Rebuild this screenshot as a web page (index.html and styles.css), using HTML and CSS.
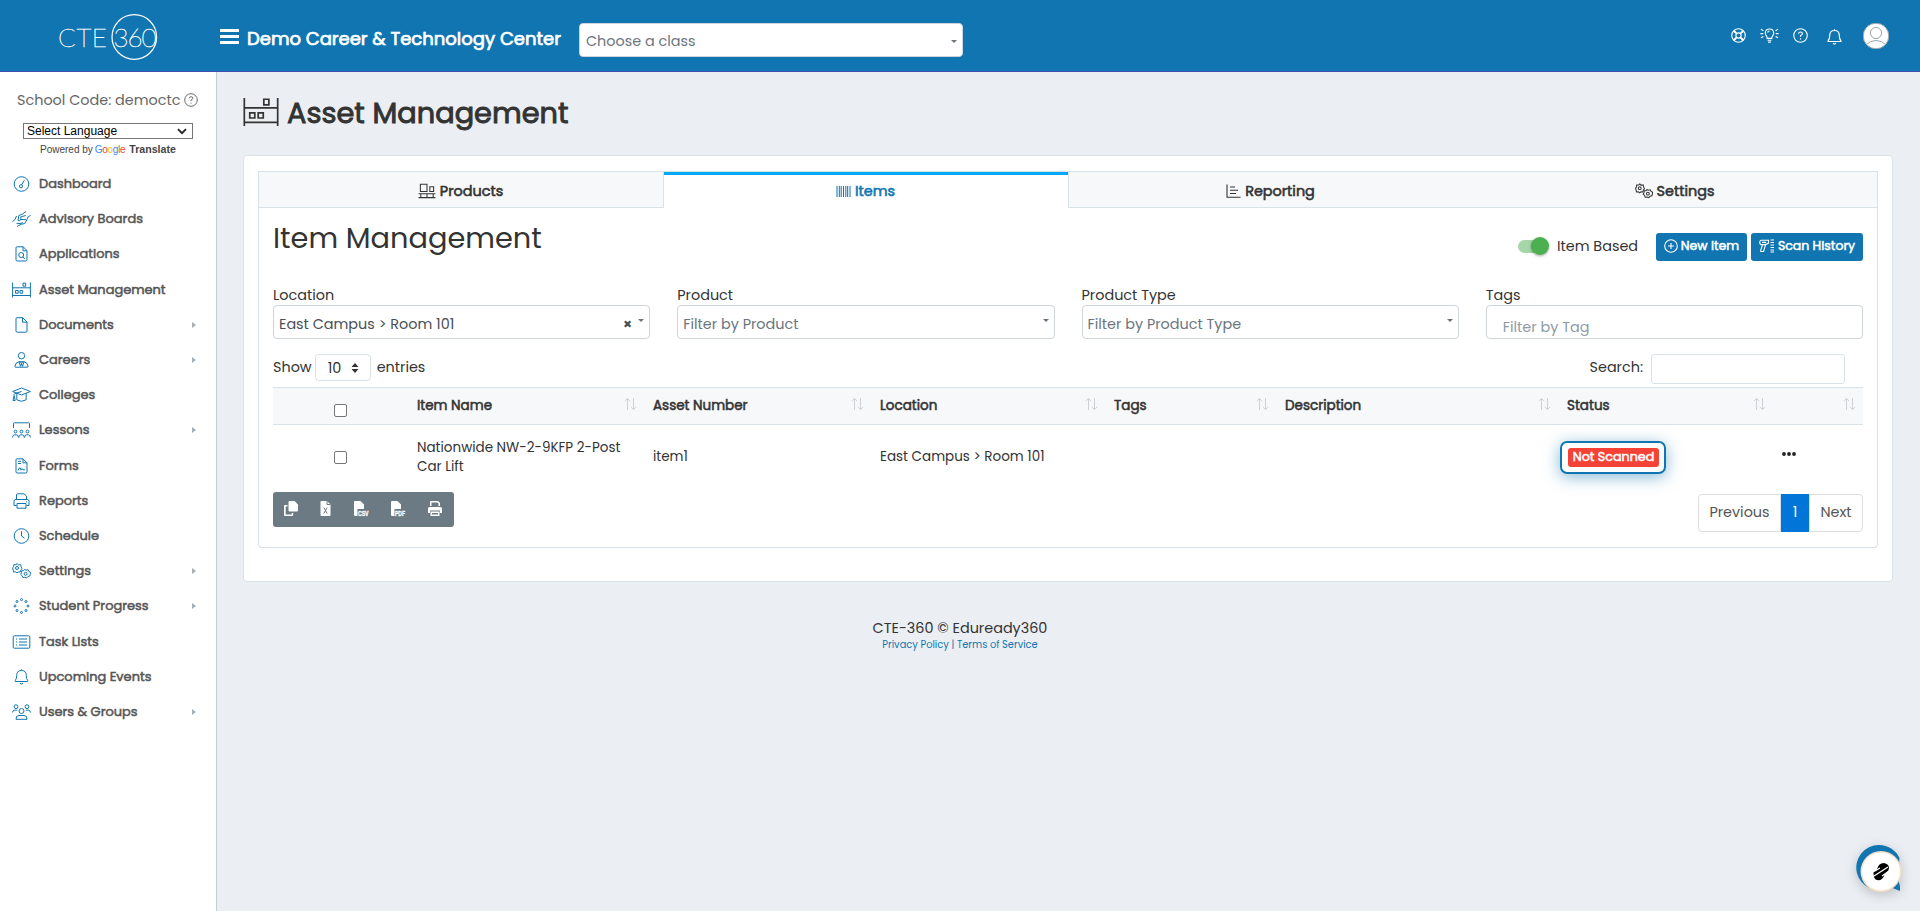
FILE: index.html
```html
<!DOCTYPE html>
<html lang="en">
<head>
<meta charset="utf-8">
<title>Asset Management</title>
<link rel="stylesheet" href="styles.css">
</head>
<body>
<svg class="sprite" aria-hidden="true">
  <symbol id="gauge" viewBox="0 0 19 16"><circle cx="9.5" cy="8" r="7.3"/><circle cx="9" cy="10.3" r="1.6"/><path d="M9.7 8.8 12.4 4.2"/></symbol>
  <symbol id="hands" viewBox="0 0 19 16"><path d="M.4 10.8 3 8.500 4.500 5M5 15.500l4-2.200 3.800-.8 2.500-4.700M18.600 4.300 15.800 6.200 15.300 8M14 .6 10.500 3 6.800 4.500 6 9.500q2 1.200 2.800-1.500V5.800l5-1.300M9 8.500l5 .2M4.500 12.300l3.500.3 3-1"/></symbol>
  <symbol id="filesearch" viewBox="0 0 19 16"><path d="M4 1.7Q4 .8 5 .8h6.2l3.8 3.8v9.2q0 1.2-1.2 1.2H5.2Q4 15 4 13.8zM11 .8v4h4"/><circle cx="9.2" cy="9" r="2.5"/><path d="m11 11 1.8 2"/></symbol>
  <symbol id="shelf" viewBox="0 0 19 16"><path d="M.6 .5v15M18.400 .5v15M.6 5.800h17.800M.6 13.500h17.800M11 1.200h2.700v3h-2.700zM3.500 8.500h2.700v2.700H3.500zM8 8.500h2.700v2.700H8z"/></symbol>
  <symbol id="file" viewBox="0 0 19 16"><path d="M4 1.700Q4 .7 5 .7h5.700l4.300 4.300v9q0 1.200-1.200 1.200H5.200Q4 15.200 4 14zM10.500.7v4.500H15"/></symbol>
  <symbol id="person" viewBox="0 0 19 16"><circle cx="9.500" cy="3.700" r="3.200"/><path d="M3.500 15.200q-.8 0-.5-1.200.8-4 4-4.300h5q3.200.3 4 4.300.3 1.200-.5 1.200zM7 9.800l1.500 4.500 1-2.500 1 2.500L12 9.800M8.500 10l1 1.800 1-1.800"/></symbol>
  <symbol id="cap" viewBox="0 0 19 16"><path d="M.6 4.500 9.500 1l8.900 3.500L9.500 8zM4.800 6.300v6.500q4.700 3 9.400 0V6.300M9.500 4.500 2.800 6.500Q2 7 2 9l-1 4.500h2.200L2.300 9"/></symbol>
  <symbol id="class" viewBox="0 0 19 16"><path d="M1.500 6V1.700Q1.500.8 2.500.8h14q1 0 1 .9V6"/><circle cx="3.500" cy="9.500" r="1.400"/><circle cx="9.500" cy="9.500" r="1.400"/><circle cx="15.500" cy="9.500" r="1.400"/><path d="M.6 15.500q0-2.700 2-2.700h1.800q2 0 2 2.700M6.800 15.500q0-2.700 2-2.700h1.400q2 0 2 2.700M12.600 15.500q0-2.700 2-2.700h1.800q2 0 2 2.700"/></symbol>
  <symbol id="form" viewBox="0 0 19 16"><path d="M4 1.700Q4 .8 5 .8h6l4 4v9q0 1.200-1.200 1.200H5.200Q4 15 4 13.800zM11 .8v4h4M6 3.300h3M6 5.500h3M6 12.500q1.500-4 2.500-2.500t0 2q2-2 2.500-.2h2"/></symbol>
  <symbol id="printer" viewBox="0 0 19 16"><path d="M4.500 6.500V1.800q0-1 1-1H12l2.500 2.300v3.400M4.500 12.500H2V8.300q0-1.800 1.800-1.800h11.400q1.800 0 1.800 1.800v4.200h-2.500M5 10.500h9v4.700H5z"/><path d="M14 8.800h1"/></symbol>
  <symbol id="clock" viewBox="0 0 19 16"><circle cx="9.500" cy="8" r="7.300"/><path d="M9.500 3.200V8l3 2.200"/></symbol>
  <symbol id="gears" viewBox="0 0 19 16"><circle cx="5" cy="5" r="1.500"/><path d="m5 .6 1.400 1.200 2.300-.2.400 2.100L10 5.600 8.700 7.300l-.5 1.800-2-.2L5 10l-1.400-1.100-2 .1-.4-1.900L.6 5l1-1.500.2-1.900 2 .1z"/><circle cx="13.600" cy="10.800" r="1.500"/><path d="m12.500 6.500 1.600.7 2-.5.8 1.800 1.700.8-.3 2.200-.5 1.500-1.900.5-1.300 1.600-1.800-.8-2 .2-.7-1.800-1.400-1.300.8-1.700.2-1.900 1.900-.1z"/></symbol>
  <symbol id="dots" viewBox="0 0 19 16"><circle cx="9.500" cy="1.600" r="1"/><circle cx="5" cy="3.500" r="1"/><circle cx="14" cy="3.500" r="1"/><circle cx="3" cy="8" r="1"/><circle cx="16" cy="8" r="1"/><circle cx="5" cy="12.500" r="1"/><circle cx="14" cy="12.500" r="1"/><circle cx="9.500" cy="14.400" r="1"/></symbol>
  <symbol id="list" viewBox="0 0 19 16"><rect x="1.200" y="1.800" width="16.600" height="12.400" rx="1.200"/><path d="M4 5h1.200M4 8h1.200M4 11h1.200M7 5h8M7 8h8M7 11h8"/></symbol>
  <symbol id="bell" viewBox="0 0 19 16"><path d="M9.500.3v1.200M3.300 12.500q-.6 0 0-1 1.400-1.700 1.400-5 0-5 4.800-5t4.800 5q0 3.300 1.400 5 .6 1 0 1zM8 14.200q1.500 1.800 3 0"/></symbol>
  <symbol id="users" viewBox="0 0 19 16"><circle cx="4" cy="2.700" r="1.900"/><circle cx="15" cy="2.700" r="1.900"/><circle cx="9.500" cy="7" r="2.500"/><path d="M.6 8.500q0-2.300 2-2.300h2.600M18.400 8.500q0-2.300-2-2.300h-2.600M4 15.300q-.3-3.800 3-3.800h5q3.300 0 3 3.800z"/></symbol>
  <symbol id="boxes" viewBox="0 0 19 16"><path d="M2.500.8h7v7.700h-7zM12.500 3.500h4v5h-4zM.6 10.800h17.800M.6 15h17.800M3 10.800V15M9.500 10.800V15M16 10.800V15"/></symbol>
  <symbol id="barcode" viewBox="0 0 16 14"><path d="M1 1v12M3.500 1v12M5.500 1v12M8 1v12M10.500 1v12M12.500 1v12M15 1v12"/></symbol>
  <symbol id="chart" viewBox="0 0 15 14"><path d="M1 .5v12.700h13.500M4 3h5M4 6.200h8M4 9.500h6"/></symbol>
  <symbol id="scan" viewBox="0 0 16 14"><path d="M9.500 1.200H2L.8 2.400v2L2 5.600h4.500l3-1.500zM3 3.400h4M3.500 5.800 1.800 11v1.500h2.800L6.500 5.800M11.500 1H15M11.500 3.500H15M11.500 6H15M11.500 8.500H15M11.500 11H15M11.500 13H15"/></symbol>
  <symbol id="plus" viewBox="0 0 14 14"><circle cx="7" cy="7" r="6.300"/><path d="M7 4v6M4 7h6"/></symbol>
  <symbol id="help" viewBox="0 0 16 16"><circle cx="8" cy="8" r="7.200"/><path d="M5.900 6.200q.2-2 2.100-2t2.100 1.800Q10.100 7.200 8 8v1.300M8 11v1.200"/></symbol>
  <symbol id="ring" viewBox="0 0 16 16"><circle cx="8" cy="8" r="7.200"/><circle cx="8" cy="8" r="2.800"/><path d="m2.500 3.500 3.800 3M3.500 2.500l3 3.800M12.500 2.500l-3 3.800M13.500 3.500l-3.800 3M2.500 12.500l3.800-3M3.500 13.500l3-3.800M12.500 13.500l-3-3.800M13.500 12.500l-3.800-3"/></symbol>
  <symbol id="bulb" viewBox="0 0 20 16"><path d="M7.500 11q0-1.500-1-2.800-1-1.300-1-3.200Q6 1 10 1t4.500 4q0 1.900-1 3.200t-1 2.800zM8 13h4M8.500 15h3M8 5q.3-1.700 2-1.800M3.500 3 .8 1.200M3.300 6H.3M3.500 9 .8 10.500M16.500 3l2.700-1.800M16.700 6h3M16.500 9l2.700 1.500"/></symbol>
  <symbol id="sort" viewBox="0 0 13 12"><path d="M3.500 12V.8M.8 3 3.500.5 6.200 3M9.500 0v11.200M6.800 9l2.700 2.500L12.200 9"/></symbol>
</svg>

<header class="topbar">
  <div class="brand"><svg class="logo" viewBox="0 0 100 46"><text x="-1" y="32.500" class="logo-text" textLength="49">CTE</text><circle cx="75.300" cy="23" r="22.300"/><text x="54.500" y="32.500" class="logo-text" textLength="43">360</text></svg></div>
  <div class="burger"><i></i><i></i><i></i></div>
  <div class="school">Demo Career &amp; Technology Center</div>
  <div class="class-select"><span>Choose a class</span><b class="caret"></b></div>
  <nav class="tools">
    <svg class="ic tool"><use href="#ring"/></svg>
    <svg class="ic tool bulb"><use href="#bulb"/></svg>
    <svg class="ic tool"><use href="#help"/></svg>
    <svg class="ic tool bell"><use href="#bell"/></svg>
    <svg class="avatar" viewBox="0 0 26 26"><circle cx="13" cy="13" r="12.800" fill="#fff"/><circle cx="13" cy="10" r="5.600"/><path d="M3.500 21.500Q7 17.500 13 17.500t9.500 4"/></svg>
  </nav>
</header>

<div class="shell">
<aside class="sidebar">
  <div class="code"><span>School Code: democtc</span><svg class="ic"><use href="#help"/></svg></div>
  <div class="lang"><span>Select Language</span><svg viewBox="0 0 10 7"><path d="m1 1.200 4 4 4-4"/></svg></div>
  <div class="powered"><span class="by">Powered by</span><span class="google"><i class="b">G</i><i class="r">o</i><i class="y">o</i><i class="b">g</i><i class="g">l</i><i class="r">e</i></span><b>Translate</b></div>
  <ul class="menu">
    <li><svg class="ic"><use href="#gauge"/></svg><span>Dashboard</span></li>
    <li><svg class="ic"><use href="#hands"/></svg><span>Advisory Boards</span></li>
    <li><svg class="ic"><use href="#filesearch"/></svg><span>Applications</span></li>
    <li><svg class="ic"><use href="#shelf"/></svg><span>Asset Management</span></li>
    <li class="more"><svg class="ic"><use href="#file"/></svg><span>Documents</span></li>
    <li class="more"><svg class="ic"><use href="#person"/></svg><span>Careers</span></li>
    <li><svg class="ic"><use href="#cap"/></svg><span>Colleges</span></li>
    <li class="more"><svg class="ic"><use href="#class"/></svg><span>Lessons</span></li>
    <li><svg class="ic"><use href="#form"/></svg><span>Forms</span></li>
    <li><svg class="ic"><use href="#printer"/></svg><span>Reports</span></li>
    <li><svg class="ic"><use href="#clock"/></svg><span>Schedule</span></li>
    <li class="more"><svg class="ic"><use href="#gears"/></svg><span>Settings</span></li>
    <li class="more"><svg class="ic"><use href="#dots"/></svg><span>Student Progress</span></li>
    <li><svg class="ic"><use href="#list"/></svg><span>Task Lists</span></li>
    <li><svg class="ic"><use href="#bell"/></svg><span>Upcoming Events</span></li>
    <li class="more"><svg class="ic"><use href="#users"/></svg><span>Users &amp; Groups</span></li>
  </ul>
</aside>

<main class="main">
  <h1 class="page-title"><svg class="ic"><use href="#shelf"/></svg><span>Asset Management</span></h1>
  <section class="card">
    <div class="tabs">
      <div class="tab"><svg class="ic w19"><use href="#boxes"/></svg><span>Products</span></div>
      <div class="tab active"><svg class="ic w16"><use href="#barcode"/></svg><span>Items</span></div>
      <div class="tab"><svg class="ic w15"><use href="#chart"/></svg><span>Reporting</span></div>
      <div class="tab"><svg class="ic w19"><use href="#gears"/></svg><span>Settings</span></div>
    </div>
    <div class="panel">
      <div class="head">
        <h2>Item Management</h2>
        <div class="actions">
          <div class="switch"><i></i></div><span class="switch-label">Item Based</span>
          <button class="btn new"><svg class="ic"><use href="#plus"/></svg><span>New Item</span></button>
          <button class="btn scan"><svg class="ic"><use href="#scan"/></svg><span>Scan History</span></button>
        </div>
      </div>
      <div class="filters">
        <div class="field"><label>Location</label><div class="box value"><span>East Campus &gt; Room 101</span><em>×</em><b class="caret"></b></div></div>
        <div class="field"><label>Product</label><div class="box"><span>Filter by Product</span><b class="caret"></b></div></div>
        <div class="field"><label>Product Type</label><div class="box"><span>Filter by Product Type</span><b class="caret"></b></div></div>
        <div class="field"><label>Tags</label><div class="box tagbox"><span>Filter by Tag</span></div></div>
      </div>
      <div class="controls">
        <span class="show">Show</span>
        <div class="count"><span>10</span><svg viewBox="0 0 8 10"><path d="M4 0 7.500 4H.5zM4 10 .5 6h7z"/></svg></div>
        <span>entries</span>
        <span class="search-label">Search:</span><div class="search"></div>
      </div>
      <table class="grid">
        <colgroup><col class="c1"><col class="c2"><col class="c3"><col class="c4"><col class="c5"><col class="c6"><col class="c7"><col class="c8"></colgroup>
        <thead><tr>
          <th class="chk"><i></i></th>
          <th><div>Item Name<svg class="ic"><use href="#sort"/></svg></div></th>
          <th><div>Asset Number<svg class="ic"><use href="#sort"/></svg></div></th>
          <th><div>Location<svg class="ic"><use href="#sort"/></svg></div></th>
          <th><div>Tags<svg class="ic"><use href="#sort"/></svg></div></th>
          <th><div>Description<svg class="ic"><use href="#sort"/></svg></div></th>
          <th><div>Status<svg class="ic"><use href="#sort"/></svg></div></th>
          <th class="last"><div><svg class="ic"><use href="#sort"/></svg></div></th>
        </tr></thead>
        <tbody><tr>
          <td class="chk"><i></i></td>
          <td>Nationwide NW-2-9KFP 2-Post<br>Car Lift</td>
          <td>item1</td>
          <td>East Campus &gt; Room 101</td>
          <td></td><td></td>
          <td class="status"><div class="ring"><span>Not Scanned</span></div></td>
          <td class="dots"><svg viewBox="0 0 14 4"><circle cx="2" cy="2" r="1.900"/><circle cx="7" cy="2" r="1.900"/><circle cx="12" cy="2" r="1.900"/></svg></td>
        </tr></tbody>
      </table>
      <div class="foot">
        <div class="exports">
          <svg viewBox="0 0 14 15"><path d="M5.500 0h5L14 3.500V9.500q0 1-1 1H5.500q-1 0-1-1V1q0-1 1-1zM1 4h2.500v1.500H1.700v8h6V12h1.500v2q0 1-1 1H1q-1 0-1-1V5q0-1 1-1z"/></svg>
          <svg viewBox="0 0 14 15"><path d="M2.500 0h5.500L11.500 3.500V14q0 1-1 1h-8q-1 0-1-1V1q0-1 1-1z"/><path class="cut" d="m4.800 6.500 3.400 6M8.200 6.500l-3.400 6M8 0v3.500h3.500"/></svg>
          <svg viewBox="0 0 14 15"><path d="M1 0h5.500L10 3.500V8H3.500v7H1q-1 0-1-1V1q0-1 1-1z"/><text x="4" y="14.600" textLength="10.500" lengthAdjust="spacingAndGlyphs">CSV</text></svg>
          <svg class="pdf" viewBox="0 0 14 15"><path d="M1 0h5.500L10 3.500V8H3.500v7H1q-1 0-1-1V1q0-1 1-1z"/><text x="4" y="14.600" textLength="10" lengthAdjust="spacingAndGlyphs">PDF</text></svg>
          <svg viewBox="0 0 14 15"><path d="M2 5V1.200Q2 0 3 0h7l2 2v3h-1.500V2.500L9.500 1.500h-6V5zM1.500 6h11Q14 6 14 7.500V12h-2V9.500H2V12H0V7.500Q0 6 1.500 6zM2.500 10.500h9V15h-9zM4 12v1.500h6V12z" fill-rule="evenodd"/></svg>
        </div>
        <div class="pager"><span class="prev">Previous</span><span class="cur">1</span><span class="next">Next</span></div>
      </div>
    </div>
  </section>
</main>
</div>

<footer class="footer"><div class="copy">CTE-360 © Eduready360</div><div class="links">Privacy Policy | Terms of Service</div></footer>

<div class="chat"><svg viewBox="0 0 60 60">
  <path class="blue" d="M27 7a22.500 22.500 0 1 0 11 42l10 4v-4.500L46 40 47.500 20A22.500 22.500 0 0 0 27 7z"/>
  <circle class="beige" cx="29" cy="33.500" r="20.500"/><circle class="white" cx="29" cy="33.500" r="19"/>
  <path d="M22 38q-2-5 3-6 1-7 7-7 5 1 5 5 0 3-3 5-2 1-2 3-2 5-7 4-3-1-3-4z"/><path class="gap" d="m22 38 14-9M22 33.500l6-3.500M30 38l7-5"/>
</svg></div>
</body>
</html>
```
FILE: styles.css
```css
* { box-sizing: border-box; }
body {
  margin: 0;
  height: 911px;
  overflow: hidden;
  position: relative;
  background: #ebeff4;
  color: #333;
  font-family: Poppins, Inter, "Open Sans", sans-serif;
  font-size: 14.4px;
}
i, em { font-style: normal; }
.sprite { position: absolute; width: 0; height: 0; }
.ic { fill: none; stroke: currentColor; stroke-width: 1.1; flex: none; }
.school, .menu span, .page-title span, .tab span, .btn span, .grid th, .ring span { font-weight: 400; -webkit-text-stroke: .04em currentColor; }

/* Top bar */
.topbar { display: flex; align-items: center; height: 72px; background: #1075b1; border-bottom: 1px solid #3f51b5; color: #fff; }
.brand { width: 220px; padding-left: 59px; height: 46px; margin-top: 2px; }
.logo { width: 100px; height: 46px; fill: none; stroke: #fff; stroke-width: 1.2; }
.logo-text { fill: #fff; stroke: #fff; stroke-width: .5; font-family: Lato, sans-serif; font-weight: 100; font-size: 26px; }
.burger { width: 19px; display: flex; flex-direction: column; gap: 3px; margin: 2px 8px 0 0; }
.burger i { height: 3px; background: #fff; }
.school { width: 332px; font-size: 18px; white-space: nowrap; padding-top: 5px; }
.class-select { display: flex; align-items: center; justify-content: space-between; width: 384px; height: 34px; margin-top: 9px; border: 1px solid #ced4da; border-radius: 4px; background: #fff; color: #6c757d; padding: 2px 5px 0 6px; }
.caret { width: 0; height: 0; border: 3px solid transparent; border-top-color: #6c757d; border-bottom: 0; }
.tools { display: flex; align-items: center; margin-left: auto; padding-right: 31px; }
.tool { width: 15px; height: 15px; stroke-width: 1.2; }
.bulb { width: 19px; margin: 0 14px; }
.bell { width: 19px; height: 16px; margin: 2px 19px 0 17px; }
.avatar { width: 26px; height: 26px; fill: none; stroke: #9aa5ae; stroke-width: 1; }

/* Sidebar */
.shell { display: flex; height: 839px; }
.sidebar { width: 217px; background: #fff; border-right: 1px solid #c2cfd6; }
.code { display: flex; align-items: center; gap: 4px; height: 20px; margin: 18px 0 0 17px; color: #666; white-space: nowrap; }
.code .ic { width: 14px; height: 14px; }
.lang { display: flex; align-items: center; justify-content: space-between; width: 170px; height: 16px; margin: 13px 0 0 23px; padding: 0 5px 0 3px; border: 1px solid #767676; font: 12px "Liberation Sans", Arial, sans-serif; color: #000; }
.lang svg { width: 10px; height: 7px; fill: none; stroke: #222; stroke-width: 1.800; }
.powered { display: flex; align-items: center; margin: 3px 0 0 40px; height: 14px; font: 10px "Liberation Sans", Arial, sans-serif; color: #444; }
.powered b { font-size: 10.6px; }
.google { margin: 0 4px 0 2px; letter-spacing: -.3px; }
.b { color: #4285f4; } .r { color: #ea4335; } .y { color: #fbbc05; } .g { color: #34a853; }
.menu { list-style: none; margin: 10.5px 0 0; padding: 0; }
.menu li { display: flex; align-items: center; height: 35.2px; padding-left: 12px; font-size: 12.96px; color: #555; }
.menu .ic { width: 19px; height: 16px; margin-right: 8px; color: #1075b1; stroke-width: 1; }
.more::after { content: ""; margin: 0 20px 0 auto; border: 3px solid transparent; border-left: 4px solid #a4b0b8; border-right: 0; }

/* Page */
.main { flex: 1; padding: 0 27px 0 26px; }
.page-title { display: flex; align-items: center; height: 42px; margin: 20px 0 21px; font-size: 28.8px; font-weight: 400; }
.page-title span { -webkit-text-stroke-width: .032em; }
.page-title .ic { width: 36px; height: 30px; margin: -2px 8px 0 0; stroke-width: .9; }
.card { height: 427px; padding: 15px 14px; background: #fff; border: 1px solid #d8e2e7; border-radius: 4px; }
.tabs { display: flex; height: 37px; border: 1px solid #d8e2e7; border-bottom: 0; background: #f7f8fa; }
.tab { flex: 1; display: flex; align-items: center; justify-content: center; gap: 4px; padding: 3px 1px 0 0; border-bottom: 1px solid #d8e2e7; }
.tab:first-child { border-right: 1px solid #d8e2e7; }
.tab.active { background: #fff; border-bottom: 0; border-top: 3px solid #03a9f4; padding: 0 1px 1px 0; color: #1075b1; border-right: 0; }
.tab.active + .tab { border-left: 1px solid #d8e2e7; }
.w19 { width: 18px; height: 16px; } .w16 { width: 15px; height: 13px; } .w15 { width: 15px; height: 14px; }
.panel { height: 340px; border: 1px solid #d8e2e7; border-top: 0; border-radius: 0 0 4px 4px; padding: 0 14px; }
.head { display: flex; justify-content: space-between; height: 77px; padding-top: 10px; }
h2 { margin: 0; font-size: 28.8px; font-weight: 400; line-height: 40px; }
.actions { display: flex; align-items: center; height: 28px; margin-top: 15px; }
.switch { display: flex; align-items: center; justify-content: flex-end; width: 29px; height: 13px; border-radius: 7px; background: #a5d6a7; margin: -2px 10px 0 0; }
.switch i { width: 18px; height: 18px; border-radius: 50%; background: #4caf50; flex: none; margin-right: -2px; box-shadow: 0 1px 3px rgba(0,0,0,.35); }
.switch-label { width: 99px; margin-top: -2px; }
.btn { display: flex; align-items: center; justify-content: center; gap: 3px; height: 28px; padding: 0 0 3px; border: 0; border-radius: 3px; background: #1075b1; color: #fff; font: inherit; font-size: 12.5px; white-space: nowrap; }
.btn span { padding-top: 1px; }
.btn .ic { width: 14px; height: 14px; }
.scan .ic { width: 16px; }
.new { width: 91px; margin-right: 4px; } .scan { width: 112px; }
.filters { display: grid; grid-template-columns: repeat(4, 1fr); gap: 27px; height: 69px; }
.field label { display: block; height: 20px; line-height: 20px; }
.box { display: flex; align-items: center; height: 34px; border: 1px solid #ced4da; border-radius: 4px; padding: 5px 5px 0; color: #6c757d; }
.box .caret { margin: -9px 0 0 auto; }
.value { color: #495057; }
.box em { margin: 0 6px 0 auto; font-weight: 700; }
.box em + .caret { margin-left: 0; }
.tagbox { padding: 11px 0 0 16px; color: #8d9ba5; }
.controls { display: flex; height: 33px; line-height: 27px; }
.count { display: flex; align-items: center; justify-content: space-between; width: 56px; height: 27px; margin: 0 6px 0 3px; padding: 1px 11px 0 12px; border: 1px solid #d8e2e7; border-radius: 4px; }
.count svg { width: 8px; height: 10px; fill: #333; }
.search-label { margin-left: auto; margin-right: 8px; }
.search { width: 194px; height: 30px; margin-right: 18px; border: 1px solid #d8e2e7; border-radius: 3px; }

/* Table */
.grid { width: 1590px; table-layout: fixed; border-collapse: collapse; }
.c1 { width: 132px; } .c2 { width: 236px; } .c3 { width: 227px; } .c4 { width: 234px; } .c5 { width: 171px; } .c6 { width: 282px; } .c7 { width: 215px; } .c8 { width: 93px; }
.grid th { height: 37px; padding: 0 4px 0 12px; text-align: left; background: #f7f8fa; border-top: 1px solid #d8e2e7; border-bottom: 1px solid #d8e2e7; font-size: 13.500px; }
.grid th.last { padding-right: 7px; }
.grid th div { display: flex; align-items: center; }
.grid th .ic { width: 13px; height: 12px; margin: -5px 0 0 auto; color: #c3c7ca; stroke-width: .8; }
.grid td { height: 65px; padding: 0 0 1px 12px; line-height: 19px; font-size: 13.500px; }
.grid .chk { padding: 0 0 0 61px; vertical-align: middle; }
.chk i { display: block; width: 13px; height: 13px; border: 1px solid #767676; border-radius: 2px; background: #fff; }
th.chk i { margin-top: 8px; }
.grid .status { padding: 1px 0 0 5px; }
.ring { width: 106px; height: 33px; border: 2px solid #1075b1; border-radius: 7px; padding: 5px 6px; box-shadow: 0 3px 16px rgba(16,117,177,.5); }
.ring span { display: block; width: 91px; height: 19px; border-radius: 3px; background: #f44336; color: #fff; font-size: 12.7px; line-height: 18px; text-align: center; white-space: nowrap; }
.dots svg { display: block; width: 14px; height: 4px; margin-top: -5px; fill: #222; }
.foot { display: flex; justify-content: space-between; }
.exports { display: flex; align-items: center; gap: 21px; width: 181px; height: 35px; margin-top: 2px; padding: 0 12px 1px 11px; border-radius: 3px; background: #6c7a84; }
.exports svg { width: 14px; height: 15px; fill: #fff; overflow: visible; }
.exports svg:last-child { margin-left: auto; }
.exports .pdf { margin-left: 2px; }
.exports text { font: 700 6.5px "Liberation Sans", sans-serif; stroke: #fff; stroke-width: .3; }
.exports .cut { fill: none; stroke: #6c7a84; }
.pager { display: flex; height: 38px; margin-top: 4px; line-height: 35px; text-align: center; color: #555; }
.pager span { border: 1px solid #ddd; }
.prev { width: 83px; border-radius: 4px 0 0 4px; }
.pager .cur { width: 28px; background: #0275d8; border-color: #0275d8; color: #fff; }
.next { width: 54px; border-radius: 0 4px 4px 0; }

.footer { position: absolute; left: 0; right: 0; top: 618px; text-align: center; }
.copy { line-height: 20px; }
.links { font-size: 9.85px; line-height: 14px; color: #1075b1; }
.chat { position: absolute; left: 1852px; top: 838px; width: 60px; height: 60px; filter: drop-shadow(0 3px 6px rgba(0,0,0,.2)); }
.chat .blue { fill: #1075b1; } .chat .beige { fill: #f3dfc5; } .chat .white { fill: #fff; }
.chat .gap { fill: none; stroke: #fff; stroke-width: 1.200; }
```
